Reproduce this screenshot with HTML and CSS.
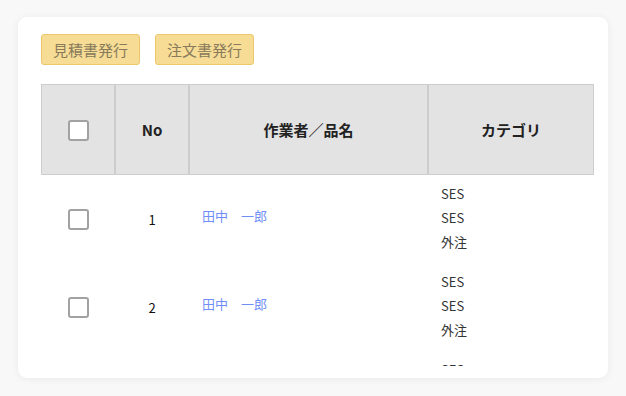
FILE: index.html
```html
<!DOCTYPE html>
<html lang="ja">
<head>
<meta charset="utf-8">
<title>発行</title>
<link rel="stylesheet" href="styles.css">
</head>
<body>
<div class="card">
  <div class="actions">
    <button class="btn" type="button">見積書発行</button>
    <button class="btn" type="button">注文書発行</button>
  </div>
  <div class="table-wrap">
    <table class="grid">
      <thead>
        <tr>
          <th class="c-check"><span class="cb"></span></th>
          <th class="c-no">No</th>
          <th class="c-name">作業者／品名</th>
          <th class="c-cat">カテゴリ</th>
        </tr>
      </thead>
      <tbody>
        <tr>
          <td class="c-check"><span class="cb"></span></td>
          <td class="c-no">1</td>
          <td class="c-name"><a class="link">田中　一郎</a></td>
          <td class="c-cat"><div>SES</div><div>SES</div><div>外注</div></td>
        </tr>
        <tr>
          <td class="c-check"><span class="cb"></span></td>
          <td class="c-no">2</td>
          <td class="c-name"><a class="link">田中　一郎</a></td>
          <td class="c-cat"><div>SES</div><div>SES</div><div>外注</div></td>
        </tr>
        <tr>
          <td class="c-check"><span class="cb"></span></td>
          <td class="c-no">3</td>
          <td class="c-name"><a class="link">田中　一郎</a></td>
          <td class="c-cat"><div>SES</div><div>SES</div><div>外注</div></td>
        </tr>
      </tbody>
    </table>
  </div>
</div>
</body>
</html>
```
FILE: styles.css
```css
* { box-sizing: border-box; }
html, body { margin: 0; padding: 0; }
body {
  background: #f8f8f8;
  padding: 17px 18px 18px 18px;
  font-family: "Noto Sans CJK JP", "Noto Sans", sans-serif;
  color: #333;
}
.card {
  background: #fff;
  border-radius: 9px;
  box-shadow: 0 1px 8px rgba(0, 0, 0, 0.06);
  height: 361px;
  padding: 17px 14px 12px 23px;
  display: flex;
  flex-direction: column;
}
.actions {
  display: flex;
  gap: 15px;
  margin-bottom: 19px;
}
.btn {
  width: 99px;
  height: 31px;
  padding: 0;
  background: #f6dc95;
  border: 1px solid #ebc86c;
  border-radius: 3px;
  color: #887a5b;
  font-family: "Noto Sans CJK JP", sans-serif;
  font-size: 15px;
  line-height: 29px;
}
.table-wrap {
  flex: 1;
  overflow: hidden;
  width: 553px;
}
.grid {
  width: 553px;
  table-layout: fixed;
  border-collapse: separate;
  border-spacing: 0;
}
.grid th {
  background: #e3e3e3;
  border: 1px solid #cdcdcd;
  height: 91px;
  font-size: 15px;
  font-weight: bold;
  color: #222;
  text-align: center;
  vertical-align: middle;
  padding: 0;
}
.grid th.c-check { width: 74px; }
.grid th.c-no { width: 74px; }
.grid th.c-name { width: 239px; }
.grid th.c-cat { width: 166px; }
.grid td {
  padding: 7px 12px 9px 13px;
  vertical-align: middle;
  font-size: 13px;
  line-height: 24px;
}
.grid td.c-check, .grid td.c-no { text-align: center; padding-left: 0; padding-right: 0; }
.grid td.c-no { color: #111; padding-top: 10px; }
.grid td.c-name { padding-bottom: 13px; }
.grid td.c-cat { color: #333; }
.cb {
  display: inline-block;
  width: 21px;
  height: 21px;
  border: 2px solid #a2a2a2;
  border-radius: 3px;
  background: #fff;
  vertical-align: middle;
}
.grid td .cb { margin-top: 2px; }
.link {
  color: #6f8ef8;
  text-decoration: none;
  cursor: pointer;
}
```
